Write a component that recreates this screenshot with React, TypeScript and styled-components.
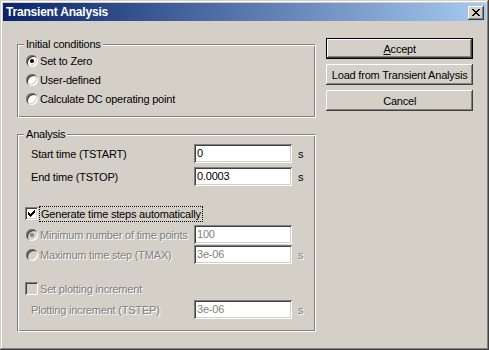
import * as React from 'react'
import styled, { createGlobalStyle, css } from 'styled-components'

const GlobalStyle = createGlobalStyle`
  html, body {
    margin: 0;
    padding: 0;
    background: #d4d0c8;
  }
  body {
    font-family: 'Liberation Sans', Arial, sans-serif;
    font-size: 11px;
    letter-spacing: -0.2px;
    color: #000;
  }
`

const Window = styled.div`
  box-sizing: border-box;
  width: 489px;
  height: 350px;
  padding: 3px;
  background: #d4d0c8;
  box-shadow: inset -1px -1px #404040, inset 1px 1px #d4d0c8,
    inset -2px -2px #808080, inset 2px 2px #ffffff;
  display: flex;
  flex-direction: column;
`

const TitleBar = styled.div`
  height: 18px;
  display: flex;
  align-items: center;
  padding: 0 2px 0 3px;
  background: linear-gradient(to right, #0a246a, #a6caf0);
`

const Title = styled.span`
  flex: 1;
  color: #fff;
  font-weight: bold;
  font-size: 12px;
  line-height: 18px;
`

const CloseButton = styled.div`
  box-sizing: border-box;
  width: 16px;
  height: 14px;
  margin-top: 1px;
  background: #d4d0c8;
  box-shadow: inset -1px -1px #404040, inset 1px 1px #ffffff,
    inset -2px -2px #808080;
  display: flex;
  align-items: center;
  justify-content: center;
`

const Body = styled.div`
  display: flex;
  gap: 10px;
  padding: 17px 13px 0 14px;
`

const LeftColumn = styled.div`
  width: 300px;
  display: flex;
  flex-direction: column;
  gap: 10px;
`

const RightColumn = styled.div`
  width: 147px;
  display: flex;
  flex-direction: column;
  gap: 5px;
`

const Group = styled.fieldset<{ $top: number; $bottom: number }>`
  box-sizing: border-box;
  margin: 0;
  min-width: 0;
  padding: ${(p) => p.$top}px 0 ${(p) => p.$bottom}px 0;
  border: 1px solid;
  border-color: #808080 #ffffff #ffffff #808080;
  box-shadow: inset 1px 1px #ffffff, inset -1px -1px #808080;
  display: flex;
  flex-direction: column;
`

const Legend = styled.legend`
  margin-left: 6px;
  padding: 0 2px 0 2px;
  background: #d4d0c8;
  line-height: 13px;
`

const disabledText = css`
  color: #808080;
  text-shadow: 1px 1px #ffffff;
`

const OptionRow = styled.label<{ $disabled?: boolean }>`
  display: flex;
  align-items: center;
  height: 19px;
  padding-left: 8px;
  gap: 2px;
  ${(p) => p.$disabled && disabledText}
`

const FieldRow = styled.div<{ $indent: number; $mt?: number }>`
  display: flex;
  align-items: center;
  height: 19px;
  margin-top: ${(p) => p.$mt ?? 0}px;
  padding-left: ${(p) => p.$indent}px;
`

const FieldLabel = styled.span<{ $width: number; $disabled?: boolean }>`
  width: ${(p) => p.$width}px;
  display: flex;
  align-items: center;
  gap: 2px;
  white-space: nowrap;
  ${(p) => p.$disabled && disabledText}
`

const TextBox = styled.div<{ $disabled?: boolean }>`
  box-sizing: border-box;
  width: 98px;
  height: 19px;
  padding: 2px 3px 0 3px;
  background: #ffffff;
  box-shadow: inset 1px 1px #808080, inset -1px -1px #ffffff,
    inset 2px 2px #404040, inset -2px -2px #d4d0c8;
  line-height: 15px;
  color: ${(p) => (p.$disabled ? '#808080' : '#000')};
`

const Unit = styled.span<{ $disabled?: boolean }>`
  margin-left: 6px;
  ${(p) => p.$disabled && disabledText}
`

const RadioMark = styled.span<{ $checked?: boolean; $disabled?: boolean }>`
  box-sizing: border-box;
  position: relative;
  flex: none;
  width: 12px;
  height: 12px;
  border-radius: 50%;
  background: ${(p) => (p.$disabled ? '#d4d0c8' : '#ffffff')};
  box-shadow: inset 1px 1px #808080, inset -1px -1px #ffffff,
    inset 2px 2px #404040, inset -2px -2px #d4d0c8;
  &::after {
    content: '';
    display: ${(p) => (p.$checked ? 'block' : 'none')};
    position: absolute;
    left: 4px;
    top: 4px;
    width: 4px;
    height: 4px;
    border-radius: 50%;
    background: ${(p) => (p.$disabled ? '#808080' : '#000')};
  }
`

const CheckMark = styled.span<{ $disabled?: boolean }>`
  box-sizing: border-box;
  flex: none;
  width: 13px;
  height: 13px;
  display: flex;
  align-items: center;
  justify-content: center;
  background: ${(p) => (p.$disabled ? '#d4d0c8' : '#ffffff')};
  box-shadow: inset 1px 1px #808080, inset -1px -1px #ffffff,
    inset 2px 2px #404040, inset -2px -2px #d4d0c8;
`

const FocusText = styled.span`
  padding: 0 1px;
  outline: 1px dotted #000;
  line-height: 14px;
`

const Button = styled.button<{ $default?: boolean }>`
  box-sizing: border-box;
  height: 21px;
  padding: 0;
  border: ${(p) => (p.$default ? '1px solid #000' : 'none')};
  background: #d4d0c8;
  font-family: inherit;
  font-size: 11px;
  letter-spacing: inherit;
  color: #000;
  box-shadow: inset -1px -1px #404040, inset 1px 1px #ffffff,
    inset -2px -2px #808080;
`

const AccessKey = styled.span`
  text-decoration: underline;
`

function Radio({
  children,
  checked,
  disabled,
}: {
  children: React.ReactNode
  checked?: boolean
  disabled?: boolean
}) {
  return (
    <OptionRow $disabled={disabled}>
      <RadioMark $checked={checked} $disabled={disabled} />
      {children}
    </OptionRow>
  )
}

function Tick({ color }: { color: string }) {
  return (
    <svg width="7" height="7" viewBox="0 0 7 7" shapeRendering="crispEdges">
      <path
        fill={color}
        d="M6 0h1v3h-1v1h-1v1h-1v1h-1v1h-1v-1h-1v-1h-1v-3h1v1h1v1h1v-1h1v-1h1z"
      />
    </svg>
  )
}

export default function App() {
  return (
    <>
      <GlobalStyle />
      <Window>
        <TitleBar>
          <Title>Transient Analysis</Title>
          <CloseButton>
            <svg width="8" height="7" viewBox="0 0 8 7" shapeRendering="crispEdges">
              <path
                fill="#000"
                d="M0 0h2v1h1v1h2v-1h1v-1h2v1h-1v1h-1v1h-1v1h1v1h1v1h1v1h-2v-1h-1v-1h-2v1h-1v1h-2v-1h1v-1h1v-1h1v-1h-1v-1h-1z"
              />
            </svg>
          </CloseButton>
        </TitleBar>
        <Body>
          <LeftColumn>
            <Group $top={0} $bottom={9}>
              <Legend>Initial conditions</Legend>
              <Radio checked>Set to Zero</Radio>
              <Radio>User-defined</Radio>
              <Radio>Calculate DC operating point</Radio>
            </Group>
            <Group $top={3} $bottom={12}>
              <Legend>Analysis</Legend>
              <FieldRow $indent={13}>
                <FieldLabel $width={163}>Start time (TSTART)</FieldLabel>
                <TextBox>0</TextBox>
                <Unit>s</Unit>
              </FieldRow>
              <FieldRow $indent={13} $mt={4}>
                <FieldLabel $width={163}>End time (TSTOP)</FieldLabel>
                <TextBox>0.0003</TextBox>
                <Unit>s</Unit>
              </FieldRow>
              <FieldRow $indent={7} $mt={18}>
                <FieldLabel $width={169}>
                  <CheckMark>
                    <Tick color="#000" />
                  </CheckMark>
                  <FocusText>Generate time steps automatically</FocusText>
                </FieldLabel>
              </FieldRow>
              <FieldRow $indent={8} $mt={2}>
                <FieldLabel $width={168} $disabled>
                  <RadioMark $checked $disabled />
                  Minimum number of time points
                </FieldLabel>
                <TextBox $disabled>100</TextBox>
              </FieldRow>
              <FieldRow $indent={8} $mt={1}>
                <FieldLabel $width={168} $disabled>
                  <RadioMark $disabled />
                  Maximum time step (TMAX)
                </FieldLabel>
                <TextBox $disabled>3e-06</TextBox>
                <Unit $disabled>s</Unit>
              </FieldRow>
              <FieldRow $indent={7} $mt={15}>
                <FieldLabel $width={169} $disabled>
                  <CheckMark $disabled />
                  Set plotting increment
                </FieldLabel>
              </FieldRow>
              <FieldRow $indent={13} $mt={2}>
                <FieldLabel $width={163} $disabled>
                  Plotting increment (TSTEP)
                </FieldLabel>
                <TextBox $disabled>3e-06</TextBox>
                <Unit $disabled>s</Unit>
              </FieldRow>
            </Group>
          </LeftColumn>
          <RightColumn>
            <Button $default>
              <AccessKey>A</AccessKey>ccept
            </Button>
            <Button>Load from Transient Analysis</Button>
            <Button>Cancel</Button>
          </RightColumn>
        </Body>
      </Window>
    </>
  )
}
